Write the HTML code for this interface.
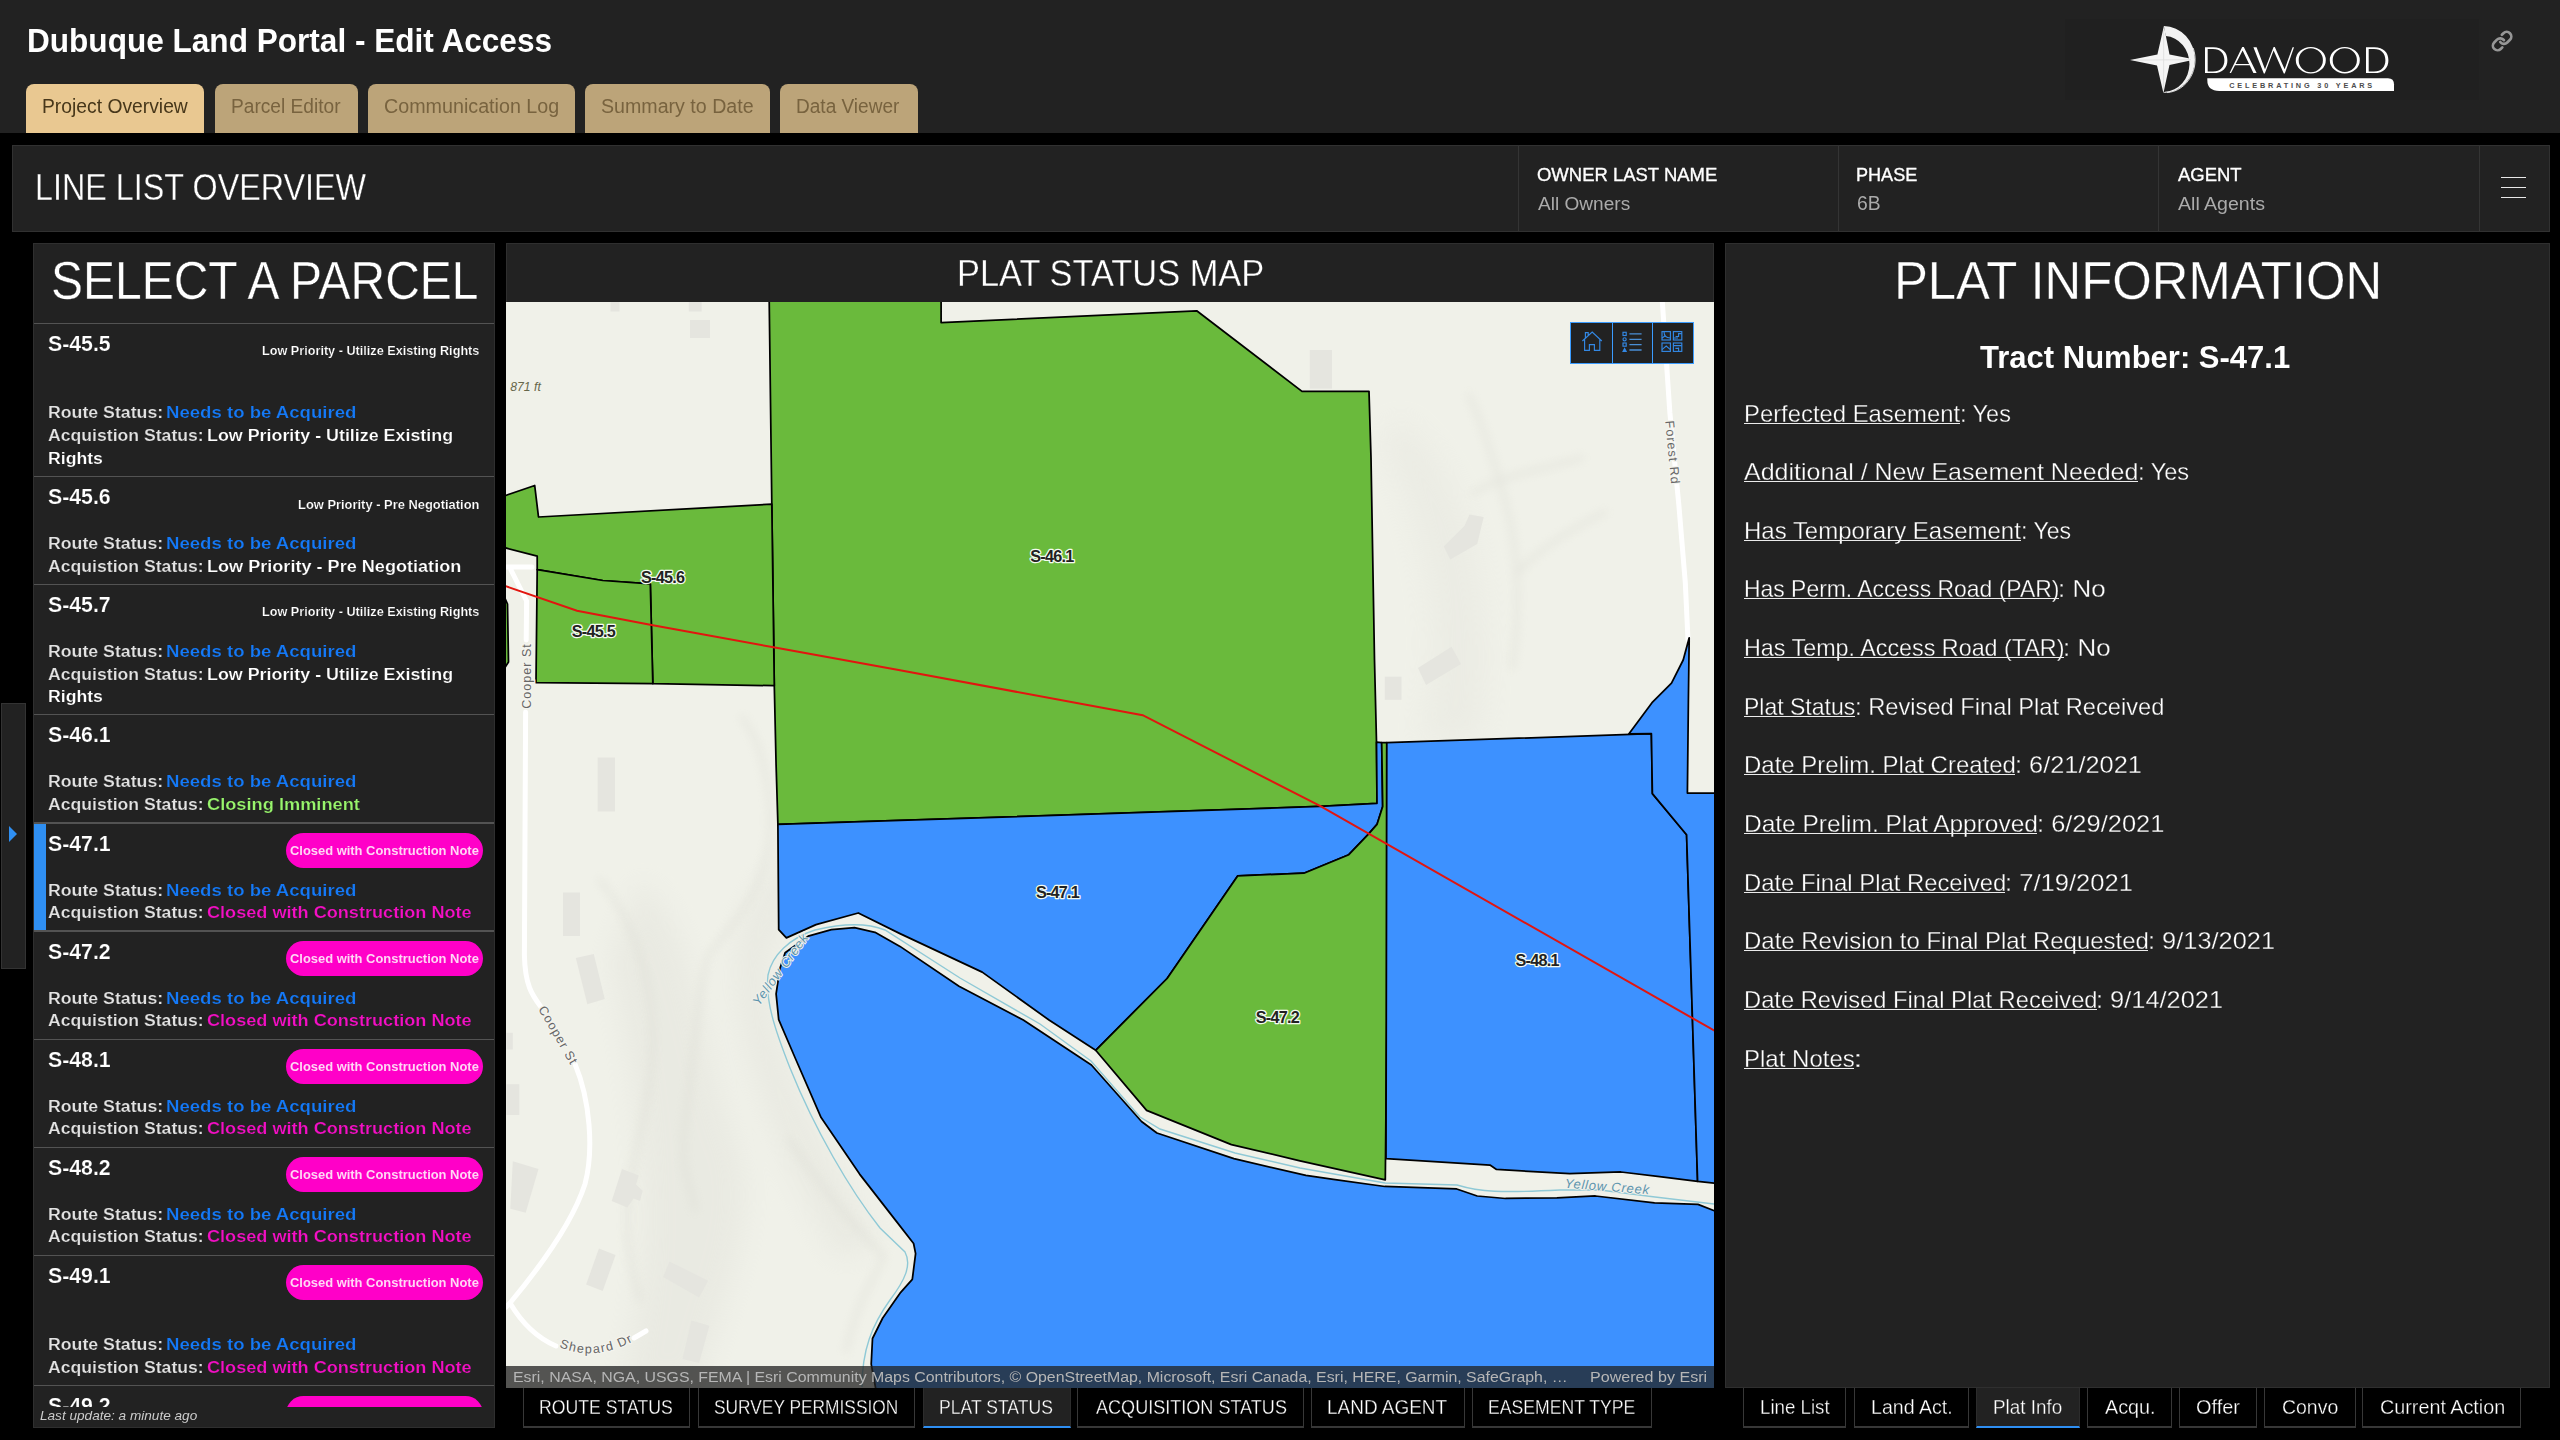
<!DOCTYPE html>
<html lang="en"><head><meta charset="utf-8"><title>Dubuque Land Portal - Edit Access</title>
<style>
html,body{margin:0;padding:0;background:#000;}
body{width:2560px;height:1440px;position:relative;overflow:hidden;font-family:"Liberation Sans",sans-serif;}
.t{position:absolute;white-space:nowrap;line-height:1;transform-origin:0 0;margin:0;padding:0;}
.hdr{position:absolute;left:0;top:0;width:2560px;height:133.3px;background:#222;}
.tab{position:absolute;top:83.7px;height:49.6px;background:#bca479;border-radius:8px 8px 0 0;}
.tab.act{background:#e9c891;}
.fbar{position:absolute;left:12px;top:145px;width:2537.5px;height:86.5px;background:#222;box-sizing:border-box;border:1px solid #313131;}
.fdiv{position:absolute;top:146px;width:1px;height:84.5px;background:#343434;}
.panel{position:absolute;background:#222;box-sizing:border-box;border:1px solid #2f2f2f;}
.clip{position:absolute;overflow:hidden;}
.sep{position:absolute;left:34px;width:460px;height:1.3px;background:#535353;}
.pill{position:absolute;width:197px;height:35px;border-radius:17.5px;background:#ff00c8;}
.btab{position:absolute;top:1387.8px;height:40.2px;box-sizing:border-box;background:#000;border:1.5px solid #373737;border-top:none;border-bottom:2.7px solid #373737;}
.btab.act{background:#222;border-color:#2c2c2c;border-bottom:2.7px solid #2f8ff2;}
.mctl{position:absolute;left:1570.2px;top:322.2px;width:123.5px;height:41.4px;box-sizing:border-box;background:#222;border:1.2px solid #3b9cff;}
.mdiv{position:absolute;top:322.2px;width:1.2px;height:41.4px;background:#3b9cff;}
.ul{position:absolute;height:1.3px;background:#ececec;}
.thin1{-webkit-text-stroke:0.35px #222;}
.thin2{-webkit-text-stroke:0.35px #222;}
.thin3{-webkit-text-stroke:0.3px #222;}
.med{-webkit-text-stroke:0.35px #fff;}
.semi{-webkit-text-stroke:0.2px #222;}
.semi2{}
.thin3b{-webkit-text-stroke:0.3px #000;}
</style></head>
<body>
<div class="hdr"></div>
<div class="t" style="left:27.25px;top:24.00px;font-size:33.60px;color:#fff;font-weight:700;transform:scaleX(0.9401);">Dubuque Land Portal - Edit Access</div>
<div class="tab act" style="left:26.25px;width:178.0px"></div>
<div class="t" style="left:42.16px;top:97.00px;font-size:19.50px;color:#47371a;transform:scaleX(0.9893);">Project Overview</div>
<div class="tab" style="left:214.5px;width:143.0px"></div>
<div class="t" style="left:231.17px;top:97.00px;font-size:19.50px;color:#78633f;transform:scaleX(0.9819);">Parcel Editor</div>
<div class="tab" style="left:367.5px;width:207.0px"></div>
<div class="t" style="left:383.97px;top:97.00px;font-size:19.50px;color:#78633f;transform:scaleX(1.0102);">Communication Log</div>
<div class="tab" style="left:584.9px;width:184.80000000000007px"></div>
<div class="t" style="left:601.12px;top:97.00px;font-size:19.50px;color:#78633f;transform:scaleX(1.0056);">Summary to Date</div>
<div class="tab" style="left:780px;width:137.5px"></div>
<div class="t" style="left:796.38px;top:97.00px;font-size:19.50px;color:#78633f;transform:scaleX(0.9766);">Data Viewer</div>
<div class="fbar"></div>
<div class="fdiv" style="left:1517.5px"></div>
<div class="fdiv" style="left:1838px"></div>
<div class="fdiv" style="left:2158px"></div>
<div class="fdiv" style="left:2478.5px"></div>
<div class="t thin1" style="left:35.11px;top:170.00px;font-size:36.90px;color:#fff;transform:scaleX(0.8762);">LINE LIST OVERVIEW</div>
<div class="t med" style="left:1537.07px;top:165.00px;font-size:19.00px;color:#fff;transform:scaleX(0.9721);">OWNER LAST NAME</div>
<div class="t" style="left:1537.70px;top:195.00px;font-size:18.80px;color:#ababab;transform:scaleX(1.0151);">All Owners</div>
<div class="t med" style="left:1856.45px;top:165.00px;font-size:19.00px;color:#fff;transform:scaleX(0.9512);">PHASE</div>
<div class="t" style="left:1856.74px;top:194.00px;font-size:19.40px;color:#ababab;transform:scaleX(0.9941);">6B</div>
<div class="t med" style="left:2177.80px;top:165.00px;font-size:19.00px;color:#fff;transform:scaleX(0.9712);">AGENT</div>
<div class="t" style="left:2177.70px;top:195.00px;font-size:18.80px;color:#ababab;transform:scaleX(1.0409);">All Agents</div>
<div style="position:absolute;left:2501px;top:176.6px;width:25px;height:1.6px;background:#e8e8e8"></div>
<div style="position:absolute;left:2501px;top:186.6px;width:25px;height:1.6px;background:#e8e8e8"></div>
<div style="position:absolute;left:2501px;top:196.6px;width:25px;height:1.6px;background:#e8e8e8"></div>
<div style="position:absolute;left:2065px;top:19px;width:414px;height:81px;background:#202020"></div>
<svg style="position:absolute;left:2120px;top:15px" width="300" height="90" viewBox="2120 15 300 90">
<path d="M2163.9 26.1 A31.3 33.4 0 0 1 2163.4 92.9 L2165 91.8 A25.6 27.9 0 0 0 2165.7 36.1 Z" fill="#f2f2f2"/>
<path d="M2167 92.6 A30 33 0 0 0 2193.2 48" fill="none" stroke="#e8e8e8" stroke-width="0.9"/>
<path d="M2163.9 26.1 L2169.5 54.4 L2195 59.6 L2169.5 65 L2163.4 92.9 L2157 65.4 L2130 60.1 L2157.4 54.6 Z" fill="#f5f5f5"/>
<path d="M2163.7 30 L2163.6 90 M2134 60.1 L2191 59.7" stroke="#dcdcdc" stroke-width="0.8" fill="none"/>
<path fill="#fff" fill-rule="evenodd" d="M2205 47.3 H2213.2 C2222.8 47.3 2227.4 52.8 2227.4 60.2 C2227.4 67.6 2222.8 73.1 2213.2 73.1 H2205 Z M2207.7 48.9 V71.5 H2213 C2220.6 71.5 2224.4 66.8 2224.4 60.2 C2224.4 53.6 2220.6 48.9 2213 48.9 Z"/>
<path fill="#fff" d="M2229.6 73.1 L2242.2 47 L2243.8 47 L2256.6 73.1 L2253.4 73.1 L2242.6 50.6 L2231 73.1 Z M2234.6 64 H2250.6 V65.2 H2234 Z"/>
<path fill="#fff" d="M2253.4 47.3 L2256.6 47.3 L2265 69.2 L2273.6 47 L2274.8 47 L2284.6 69.2 L2292.6 47.3 L2294 47.3 L2284.8 73.6 L2283.8 73.6 L2273.6 50.6 L2264.8 73.6 L2263.8 73.6 Z"/>
<path fill="#fff" fill-rule="evenodd" d="M2295.8 60.2 A15 13.3 0 1 0 2325.8 60.2 A15 13.3 0 1 0 2295.8 60.2 Z M2298.7000000000003 60.2 A12.1 11.9 0 1 1 2322.9 60.2 A12.1 11.9 0 1 1 2298.7000000000003 60.2 Z"/>
<path fill="#fff" fill-rule="evenodd" d="M2329.8 60.2 A15 13.3 0 1 0 2359.8 60.2 A15 13.3 0 1 0 2329.8 60.2 Z M2332.7000000000003 60.2 A12.1 11.9 0 1 1 2356.9 60.2 A12.1 11.9 0 1 1 2332.7000000000003 60.2 Z"/>
<path fill="#fff" fill-rule="evenodd" d="M2366 47.3 H2374.2 C2383.8 47.3 2388.4 52.8 2388.4 60.2 C2388.4 67.6 2383.8 73.1 2374.2 73.1 H2366 Z M2368.7 48.9 V71.5 H2374 C2381.6 71.5 2385.4 66.8 2385.4 60.2 C2385.4 53.6 2381.6 48.9 2374 48.9 Z"/>
<path d="M2207.3 78.3 H2388 Q2394 78.3 2394 84.3 V90.9 H2219.3 Q2207.3 90.9 2207.3 80 Z" fill="#fff"/>
<text x="2229.2" y="87.9" font-family="Liberation Sans, sans-serif" font-weight="700" font-size="7.3" fill="#4c4c4c" textLength="143" lengthAdjust="spacing">CELEBRATING 30 YEARS</text>
</svg>
<svg style="position:absolute;left:2491.1px;top:30.4px" width="22.2" height="22.2" viewBox="0 0 24 24" fill="none" stroke="#969696" stroke-width="2.9" stroke-linecap="round" stroke-linejoin="round"><path d="M10 13a5 5 0 0 0 7.54.54l3-3a5 5 0 0 0-7.07-7.07l-1.72 1.71"/><path d="M14 11a5 5 0 0 0-7.54-.54l-3 3a5 5 0 0 0 7.07 7.07l1.71-1.71"/></svg>
<div class="panel" style="left:33px;top:242.5px;width:461.5px;height:1185px"></div>
<div class="t thin2" style="left:50.74px;top:254.00px;font-size:53.50px;color:#fff;transform:scaleX(0.8966);">SELECT A PARCEL</div>
<div class="clip" style="left:0;top:0;width:2560px;height:1406.5px">
<div class="sep" style="top:322.7px"></div>
<div class="t semi" style="left:48.16px;top:333.00px;font-size:22.00px;color:#fff;font-weight:700;transform:scaleX(0.9673);">S-45.5</div>
<div class="t semi" style="left:261.98px;top:344.00px;font-size:13.60px;color:#fff;font-weight:700;transform:scaleX(0.9314);">Low Priority - Utilize Existing Rights</div>
<div class="t semi" style="left:47.75px;top:404.00px;font-size:17.40px;color:#e2e2e2;font-weight:700;transform:scaleX(1.0189);">Route Status:</div>
<div class="t semi" style="left:166.09px;top:404.00px;font-size:17.40px;color:#1479f7;font-weight:700;transform:scaleX(1.0687);">Needs to be Acquired</div>
<div class="t semi" style="left:48.46px;top:427.00px;font-size:17.40px;color:#e2e2e2;font-weight:700;transform:scaleX(1.0136);">Acquistion Status:</div>
<div class="t semi" style="left:206.84px;top:427.00px;font-size:17.40px;color:#fff;font-weight:700;transform:scaleX(1.0269);">Low Priority - Utilize Existing</div>
<div class="t semi" style="left:47.75px;top:450.00px;font-size:17.40px;color:#fff;font-weight:700;transform:scaleX(1.0155);">Rights</div>
<div class="sep" style="top:476.0px"></div>
<div class="t semi" style="left:48.16px;top:486.00px;font-size:22.00px;color:#fff;font-weight:700;transform:scaleX(0.9673);">S-45.6</div>
<div class="t semi" style="left:298.16px;top:498.00px;font-size:13.60px;color:#fff;font-weight:700;transform:scaleX(0.9496);">Low Priority - Pre Negotiation</div>
<div class="t semi" style="left:47.75px;top:535.00px;font-size:17.40px;color:#e2e2e2;font-weight:700;transform:scaleX(1.0189);">Route Status:</div>
<div class="t semi" style="left:166.09px;top:535.00px;font-size:17.40px;color:#1479f7;font-weight:700;transform:scaleX(1.0687);">Needs to be Acquired</div>
<div class="t semi" style="left:48.46px;top:558.00px;font-size:17.40px;color:#e2e2e2;font-weight:700;transform:scaleX(1.0136);">Acquistion Status:</div>
<div class="t semi" style="left:206.82px;top:558.00px;font-size:17.40px;color:#fff;font-weight:700;transform:scaleX(1.0401);">Low Priority - Pre Negotiation</div>
<div class="sep" style="top:583.9px"></div>
<div class="t semi" style="left:48.16px;top:594.00px;font-size:22.00px;color:#fff;font-weight:700;transform:scaleX(0.9673);">S-45.7</div>
<div class="t semi" style="left:261.98px;top:605.00px;font-size:13.60px;color:#fff;font-weight:700;transform:scaleX(0.9314);">Low Priority - Utilize Existing Rights</div>
<div class="t semi" style="left:47.75px;top:643.00px;font-size:17.40px;color:#e2e2e2;font-weight:700;transform:scaleX(1.0189);">Route Status:</div>
<div class="t semi" style="left:166.09px;top:643.00px;font-size:17.40px;color:#1479f7;font-weight:700;transform:scaleX(1.0687);">Needs to be Acquired</div>
<div class="t semi" style="left:48.46px;top:666.00px;font-size:17.40px;color:#e2e2e2;font-weight:700;transform:scaleX(1.0136);">Acquistion Status:</div>
<div class="t semi" style="left:206.84px;top:666.00px;font-size:17.40px;color:#fff;font-weight:700;transform:scaleX(1.0269);">Low Priority - Utilize Existing</div>
<div class="t semi" style="left:47.75px;top:688.00px;font-size:17.40px;color:#fff;font-weight:700;transform:scaleX(1.0155);">Rights</div>
<div class="sep" style="top:714.2px"></div>
<div class="t semi" style="left:48.16px;top:724.00px;font-size:22.00px;color:#fff;font-weight:700;transform:scaleX(0.9673);">S-46.1</div>
<div class="t semi" style="left:47.75px;top:773.00px;font-size:17.40px;color:#e2e2e2;font-weight:700;transform:scaleX(1.0189);">Route Status:</div>
<div class="t semi" style="left:166.09px;top:773.00px;font-size:17.40px;color:#1479f7;font-weight:700;transform:scaleX(1.0687);">Needs to be Acquired</div>
<div class="t semi" style="left:48.46px;top:796.00px;font-size:17.40px;color:#e2e2e2;font-weight:700;transform:scaleX(1.0136);">Acquistion Status:</div>
<div class="t semi" style="left:207.27px;top:796.00px;font-size:17.40px;color:#98f56c;font-weight:700;transform:scaleX(1.0481);">Closing Imminent</div>
<div class="sep" style="top:822.4px"></div>
<div style="position:absolute;left:34px;top:823.7px;width:11.5px;height:107px;background:#2f8ff2"></div>
<div class="t semi" style="left:48.16px;top:833.00px;font-size:22.00px;color:#fff;font-weight:700;transform:scaleX(0.9673);">S-47.1</div>
<div class="pill" style="left:286.1px;top:833.3px"></div>
<div class="t" style="left:290.08px;top:844.00px;font-size:13.60px;color:#ffd6f5;font-weight:700;transform:scaleX(0.9507);">Closed with Construction Note</div>
<div class="t semi" style="left:47.75px;top:882.00px;font-size:17.40px;color:#e2e2e2;font-weight:700;transform:scaleX(1.0189);">Route Status:</div>
<div class="t semi" style="left:166.09px;top:882.00px;font-size:17.40px;color:#1479f7;font-weight:700;transform:scaleX(1.0687);">Needs to be Acquired</div>
<div class="t semi" style="left:48.46px;top:904.00px;font-size:17.40px;color:#e2e2e2;font-weight:700;transform:scaleX(1.0136);">Acquistion Status:</div>
<div class="t semi" style="left:207.28px;top:904.00px;font-size:17.40px;color:#f30fc4;font-weight:700;transform:scaleX(1.0415);">Closed with Construction Note</div>
<div class="sep" style="top:930.4px"></div>
<div class="t semi" style="left:48.16px;top:941.00px;font-size:22.00px;color:#fff;font-weight:700;transform:scaleX(0.9673);">S-47.2</div>
<div class="pill" style="left:286.1px;top:941.3px"></div>
<div class="t" style="left:290.08px;top:952.00px;font-size:13.60px;color:#ffd6f5;font-weight:700;transform:scaleX(0.9507);">Closed with Construction Note</div>
<div class="t semi" style="left:47.75px;top:990.00px;font-size:17.40px;color:#e2e2e2;font-weight:700;transform:scaleX(1.0189);">Route Status:</div>
<div class="t semi" style="left:166.09px;top:990.00px;font-size:17.40px;color:#1479f7;font-weight:700;transform:scaleX(1.0687);">Needs to be Acquired</div>
<div class="t semi" style="left:48.46px;top:1012.00px;font-size:17.40px;color:#e2e2e2;font-weight:700;transform:scaleX(1.0136);">Acquistion Status:</div>
<div class="t semi" style="left:207.28px;top:1012.00px;font-size:17.40px;color:#f30fc4;font-weight:700;transform:scaleX(1.0415);">Closed with Construction Note</div>
<div class="sep" style="top:1038.5px"></div>
<div class="t semi" style="left:48.16px;top:1049.00px;font-size:22.00px;color:#fff;font-weight:700;transform:scaleX(0.9673);">S-48.1</div>
<div class="pill" style="left:286.1px;top:1049.4px"></div>
<div class="t" style="left:290.08px;top:1060.00px;font-size:13.60px;color:#ffd6f5;font-weight:700;transform:scaleX(0.9507);">Closed with Construction Note</div>
<div class="t semi" style="left:47.75px;top:1098.00px;font-size:17.40px;color:#e2e2e2;font-weight:700;transform:scaleX(1.0189);">Route Status:</div>
<div class="t semi" style="left:166.09px;top:1098.00px;font-size:17.40px;color:#1479f7;font-weight:700;transform:scaleX(1.0687);">Needs to be Acquired</div>
<div class="t semi" style="left:48.46px;top:1120.00px;font-size:17.40px;color:#e2e2e2;font-weight:700;transform:scaleX(1.0136);">Acquistion Status:</div>
<div class="t semi" style="left:207.28px;top:1120.00px;font-size:17.40px;color:#f30fc4;font-weight:700;transform:scaleX(1.0415);">Closed with Construction Note</div>
<div class="sep" style="top:1146.5px"></div>
<div class="t semi" style="left:48.16px;top:1157.00px;font-size:22.00px;color:#fff;font-weight:700;transform:scaleX(0.9673);">S-48.2</div>
<div class="pill" style="left:286.1px;top:1157.4px"></div>
<div class="t" style="left:290.08px;top:1168.00px;font-size:13.60px;color:#ffd6f5;font-weight:700;transform:scaleX(0.9507);">Closed with Construction Note</div>
<div class="t semi" style="left:47.75px;top:1206.00px;font-size:17.40px;color:#e2e2e2;font-weight:700;transform:scaleX(1.0189);">Route Status:</div>
<div class="t semi" style="left:166.09px;top:1206.00px;font-size:17.40px;color:#1479f7;font-weight:700;transform:scaleX(1.0687);">Needs to be Acquired</div>
<div class="t semi" style="left:48.46px;top:1228.00px;font-size:17.40px;color:#e2e2e2;font-weight:700;transform:scaleX(1.0136);">Acquistion Status:</div>
<div class="t semi" style="left:207.28px;top:1228.00px;font-size:17.40px;color:#f30fc4;font-weight:700;transform:scaleX(1.0415);">Closed with Construction Note</div>
<div class="sep" style="top:1254.5px"></div>
<div class="t semi" style="left:48.16px;top:1265.00px;font-size:22.00px;color:#fff;font-weight:700;transform:scaleX(0.9673);">S-49.1</div>
<div class="pill" style="left:286.1px;top:1265.4px"></div>
<div class="t" style="left:290.08px;top:1276.00px;font-size:13.60px;color:#ffd6f5;font-weight:700;transform:scaleX(0.9507);">Closed with Construction Note</div>
<div class="t semi" style="left:47.75px;top:1336.00px;font-size:17.40px;color:#e2e2e2;font-weight:700;transform:scaleX(1.0189);">Route Status:</div>
<div class="t semi" style="left:166.09px;top:1336.00px;font-size:17.40px;color:#1479f7;font-weight:700;transform:scaleX(1.0687);">Needs to be Acquired</div>
<div class="t semi" style="left:48.46px;top:1359.00px;font-size:17.40px;color:#e2e2e2;font-weight:700;transform:scaleX(1.0136);">Acquistion Status:</div>
<div class="t semi" style="left:207.28px;top:1359.00px;font-size:17.40px;color:#f30fc4;font-weight:700;transform:scaleX(1.0415);">Closed with Construction Note</div>
<div class="sep" style="top:1384.9px"></div>
<div class="t semi" style="left:48.16px;top:1395.00px;font-size:22.00px;color:#fff;font-weight:700;transform:scaleX(0.9673);">S-49.2</div>
<div class="pill" style="left:286.1px;top:1395.8px"></div>
<div class="t" style="left:290.08px;top:1406.00px;font-size:13.60px;color:#ffd6f5;font-weight:700;transform:scaleX(0.9507);">Closed with Construction Note</div>
<div class="t semi" style="left:47.75px;top:1444.00px;font-size:17.40px;color:#e2e2e2;font-weight:700;transform:scaleX(1.0189);">Route Status:</div>
<div class="t semi" style="left:166.09px;top:1444.00px;font-size:17.40px;color:#1479f7;font-weight:700;transform:scaleX(1.0687);">Needs to be Acquired</div>
<div class="t semi" style="left:48.46px;top:1467.00px;font-size:17.40px;color:#e2e2e2;font-weight:700;transform:scaleX(1.0136);">Acquistion Status:</div>
<div class="t semi" style="left:207.28px;top:1467.00px;font-size:17.40px;color:#f30fc4;font-weight:700;transform:scaleX(1.0415);">Closed with Construction Note</div>
</div>
<div class="t" style="left:39.59px;top:1410.00px;font-size:12.60px;color:#ccc;font-style:italic;transform:scaleX(1.0796);">Last update: a minute ago</div>
<div style="position:absolute;left:1px;top:702.5px;width:23px;height:264px;background:#222;border:1px solid #333;box-sizing:content-box"></div>
<div style="position:absolute;left:9px;top:826px;width:0;height:0;border-top:8px solid transparent;border-bottom:8px solid transparent;border-left:8px solid #2f8ff2"></div>
<div class="panel" style="left:506px;top:242.5px;width:1208px;height:1145.3px"></div>
<div class="t thin1" style="left:956.75px;top:255.00px;font-size:37.70px;color:#fff;transform:scaleX(0.9132);">PLAT STATUS MAP</div>
<svg style="position:absolute;left:506px;top:302px" width="1208" height="1085.8" viewBox="506 302 1208 1085.8">
<defs><filter id="bl" x="-30%" y="-30%" width="160%" height="160%"><feGaussianBlur stdDeviation="14"/></filter><filter id="bl2" x="-30%" y="-30%" width="160%" height="160%"><feGaussianBlur stdDeviation="5"/></filter></defs>
<rect x="506" y="302" width="1208" height="1086" fill="#f0f1e9"/>
<g filter="url(#bl)" opacity="0.32"><path d="M640 880 C700 930 700 1050 740 1150 C760 1230 720 1300 700 1387 L620 1387 C660 1250 640 1100 610 960Z" fill="#dcdcd4"/><path d="M870 760 C900 820 780 900 770 960 C760 1000 790 1100 880 1240 L840 1260 C760 1130 720 1000 740 930 C760 860 840 820 840 760Z" fill="#dcdcd4"/><path d="M1400 420 C1470 470 1500 600 1480 740 L1420 740 C1450 620 1420 520 1380 440Z" fill="#e2e2da"/></g>
<g filter="url(#bl2)" fill="none" stroke="#d6d6ce" stroke-width="5" opacity="0.38" stroke-linecap="round"><path d="M1469 395 C1485 430 1500 480 1508 512 S1522 600 1512 668"/><path d="M1582 458 C1540 470 1500 476 1473 493"/><path d="M1605 512 C1570 530 1540 548 1516 574"/><path d="M742 718 C765 745 772 800 770 832 C766 880 750 905 709 954 C698 985 694 1060 686 1115 S690 1180 695 1210"/><path d="M789 1139 C810 1170 830 1200 884 1257 C870 1285 858 1300 846 1351"/><path d="M600 880 C640 930 660 1000 650 1080 S610 1200 640 1300"/></g>
<polygon points="690.0,320.0 710.0,320.0 710.0,338.0 690.0,338.0" fill="#e5e5df"/>
<polygon points="610.5,302.0 619.5,302.0 619.5,311.5 610.5,311.5" fill="#e5e5df"/>
<polygon points="688.8,302.0 701.6,302.0 701.6,311.5 688.8,311.5" fill="#e5e5df"/>
<polygon points="1309.8,350.0 1332.0,350.0 1332.0,388.6 1309.8,388.6" fill="#e5e5df"/>
<polygon points="1469.5,514.5 1483.7,517.0 1477.2,544.0 1450.3,559.4 1443.8,546.6 1464.4,526.0" fill="#e5e5df"/>
<polygon points="1418.0,668.0 1451.6,646.8 1461.0,664.0 1426.0,685.0" fill="#e5e5df"/>
<polygon points="1384.8,676.7 1401.5,676.7 1401.5,699.8 1384.8,699.8" fill="#e5e5df"/>
<polygon points="597.6,757.6 615.0,757.6 615.0,811.6 597.6,811.6" fill="#e5e5df"/>
<polygon points="563.0,892.5 580.0,892.5 580.0,936.0 563.0,936.0" fill="#e5e5df"/>
<polygon points="575.8,958.0 593.8,954.1 604.8,999.0 587.3,1004.2" fill="#e5e5df"/>
<polygon points="506.4,1032.8 512.8,1032.8 512.8,1049.5 506.4,1049.5" fill="#e5e5df"/>
<polygon points="506.4,1084.2 519.3,1084.2 519.3,1115.0 506.4,1115.0" fill="#e5e5df"/>
<polygon points="512.8,1161.3 538.5,1169.0 525.7,1212.7 510.3,1208.8" fill="#e5e5df"/>
<polygon points="622.0,1169.0 638.7,1175.4 636.1,1184.4 642.6,1190.8 640.0,1201.1 633.6,1198.5 627.2,1207.5 611.7,1201.1" fill="#e5e5df"/>
<polygon points="598.9,1248.6 615.6,1255.0 602.7,1291.0 586.1,1284.6" fill="#e5e5df"/>
<polygon points="669.5,1261.5 708.1,1280.7 699.1,1297.4 663.1,1276.9" fill="#e5e5df"/>
<polygon points="691.4,1320.5 709.4,1325.7 699.1,1362.9 682.4,1359.1" fill="#e5e5df"/>
<path d="M506 567 L532 567 M511 570 L526.6 601 L526.2 640 M525.6 712 L524.4 955 C525 985 532 995 541 1007 M575 1064 C590 1100 594 1150 585 1184 C575 1215 550 1255 510 1303 L506 1307 M510 1303 C520 1320 535 1337 556 1346 M634 1338 L646 1331" fill="none" stroke="#fff" stroke-width="5" stroke-linecap="round" stroke-linejoin="round"/>
<path d="M1662.2 300 L1669.9 413 L1678.9 505.5 L1685.3 582.6 L1688 640" fill="none" stroke="#fff" stroke-width="5" stroke-linecap="round" stroke-linejoin="round"/>
<path d="M862 1387 C862 1350 872 1325 890 1300 C905 1280 912 1265 905 1252 L880 1228 C850 1190 815 1130 790 1068 C775 1030 765 1000 768 975 C772 955 790 938 815 930 C840 924 865 922 885 930 L960 978 L1040 1024 L1091 1061 L1140 1117 L1160 1129 L1235 1153 L1300 1168 L1385 1183 L1457 1185 C1480 1192 1500 1193 1560 1190 L1600 1190 L1655 1197 L1714 1204" fill="none" stroke="#8fc9d6" stroke-width="1.4"/>
<polygon points="769.2,300.0 941.1,300.0 941.1,322.6 1196.7,310.8 1302.0,391.4 1369.0,391.4 1371.0,457.7 1374.5,660.0 1376.5,742.2 1377.0,803.3 1320.0,806.4 900.0,820.5 777.9,824.4 776.1,765.3 774.3,685.7 771.8,504.2" fill="#6aba3c" stroke="#000" stroke-width="1.75" stroke-linejoin="round"/>
<polygon points="504.0,496.0 534.7,485.5 538.5,517.0 771.8,504.2 774.3,685.7 652.8,683.6 650.3,583.8 602.7,580.5 537.2,569.7 537.2,556.1 504.0,547.5" fill="#6aba3c" stroke="#000" stroke-width="1.75" stroke-linejoin="round"/>
<polygon points="537.2,569.7 602.7,580.5 650.3,583.8 652.8,683.6 536.0,682.6" fill="#6aba3c" stroke="#000" stroke-width="1.75" stroke-linejoin="round"/>
<polygon points="504.0,596.0 507.5,604.0 508.5,662.0 504.0,669.0" fill="#6aba3c" stroke="#000" stroke-width="1.75" stroke-linejoin="round"/>
<polygon points="777.9,824.4 900.0,820.5 1320.0,806.4 1377.0,803.3 1376.5,742.2 1381.7,742.7 1382.7,806.4 1377.0,824.4 1368.0,834.7 1348.8,854.7 1303.9,873.2 1237.8,875.8 1167.1,978.5 1095.7,1050.3 1049.0,1020.0 982.2,972.1 900.0,933.6 858.3,913.0 816.0,924.6 786.4,937.9 778.7,929.7" fill="#3d91ff" stroke="#000" stroke-width="1.75" stroke-linejoin="round"/>
<polygon points="1381.7,742.7 1386.8,742.7 1386.8,1020.0 1385.3,1179.8 1300.0,1160.8 1231.4,1144.6 1146.6,1110.4 1095.7,1050.3 1167.1,978.5 1237.8,875.8 1303.9,873.2 1348.8,854.7 1368.0,834.7 1377.0,824.4 1382.7,806.4" fill="#6aba3c" stroke="#000" stroke-width="1.75" stroke-linejoin="round"/>
<polygon points="1386.8,742.7 1651.4,733.7 1652.4,793.6 1686.6,834.7 1692.5,1020.0 1697.6,1181.3 1659.6,1176.7 1621.0,1172.0 1569.7,1173.6 1496.5,1169.5 1490.0,1165.1 1386.0,1158.7" fill="#3d91ff" stroke="#000" stroke-width="1.75" stroke-linejoin="round"/>
<polygon points="1628.8,734.0 1652.0,702.7 1671.5,683.2 1683.2,660.0 1689.2,637.8 1688.4,700.0 1687.4,793.1 1716.0,793.1 1716.0,1183.3 1697.6,1181.3 1692.5,1020.0 1686.6,834.7 1652.4,793.6 1651.4,733.7" fill="#3d91ff" stroke="#000" stroke-width="1.75" stroke-linejoin="round"/>
<polygon points="785.1,952.8 808.2,936.1 831.4,929.7 854.5,927.7 875.0,932.3 900.0,946.4 959.0,986.2 1023.3,1020.0 1091.4,1065.0 1141.5,1121.5 1156.9,1133.0 1233.9,1158.7 1305.9,1175.4 1333.4,1179.3 1384.8,1186.5 1456.7,1189.0 1477.2,1196.0 1505.5,1198.5 1556.9,1197.8 1595.4,1196.0 1654.5,1202.9 1698.0,1204.4 1716.0,1211.4 1716.0,1390.0 876.0,1390.0 871.2,1364.2 872.5,1338.5 882.7,1318.0 900.7,1292.3 912.3,1279.4 915.6,1253.7 913.6,1243.5 895.6,1220.4 859.6,1174.1 821.1,1117.6 795.4,1058.5 778.7,1019.6 776.1,993.9 780.0,968.2" fill="#3d91ff" stroke="#000" stroke-width="1.75" stroke-linejoin="round"/>
<polyline points="504,585.6 577,610.8 651.5,625 773.6,647.3 900,670.3 1142.7,715.2 1320,805.9 1716,1031.6" fill="none" stroke="#e2150f" stroke-width="2"/>
<text x="662.5999999999999" y="583.5" text-anchor="middle" font-family="Liberation Sans, sans-serif" font-weight="700" font-size="16.2" letter-spacing="-0.75" fill="#222" stroke="#f4fbf0" stroke-width="2.5" stroke-linejoin="round" paint-order="stroke">S-45.6</text>
<text x="593.3" y="637.4" text-anchor="middle" font-family="Liberation Sans, sans-serif" font-weight="700" font-size="16.2" letter-spacing="-0.75" fill="#222" stroke="#f4fbf0" stroke-width="2.5" stroke-linejoin="round" paint-order="stroke">S-45.5</text>
<text x="1051.8999999999999" y="562.1" text-anchor="middle" font-family="Liberation Sans, sans-serif" font-weight="700" font-size="16.2" letter-spacing="-0.75" fill="#222" stroke="#f4fbf0" stroke-width="2.5" stroke-linejoin="round" paint-order="stroke">S-46.1</text>
<text x="1057.5" y="897.7" text-anchor="middle" font-family="Liberation Sans, sans-serif" font-weight="700" font-size="16.2" letter-spacing="-0.75" fill="#222" stroke="#f4fbf0" stroke-width="2.5" stroke-linejoin="round" paint-order="stroke">S-47.1</text>
<text x="1277.3" y="1023.5" text-anchor="middle" font-family="Liberation Sans, sans-serif" font-weight="700" font-size="16.2" letter-spacing="-0.75" fill="#222" stroke="#f4fbf0" stroke-width="2.5" stroke-linejoin="round" paint-order="stroke">S-47.2</text>
<text x="1537.1" y="965.8" text-anchor="middle" font-family="Liberation Sans, sans-serif" font-weight="700" font-size="16.2" letter-spacing="-0.75" fill="#222" stroke="#f4fbf0" stroke-width="2.5" stroke-linejoin="round" paint-order="stroke">S-48.1</text>
<text transform="translate(530.5,676) rotate(-90)" text-anchor="middle" font-family="Liberation Sans, sans-serif" font-size="12.6" fill="#666" stroke="#f4f4ee" stroke-width="2.5" paint-order="stroke" letter-spacing="1">Cooper St</text>
<text transform="translate(554.5,1037.5) rotate(60)" text-anchor="middle" font-family="Liberation Sans, sans-serif" font-size="12.6" fill="#666" stroke="#f4f4ee" stroke-width="2.5" paint-order="stroke" letter-spacing="1">Cooper St</text>
<text transform="translate(1668.3,453) rotate(84.5)" text-anchor="middle" font-family="Liberation Sans, sans-serif" font-size="12.6" fill="#666" stroke="#f4f4ee" stroke-width="2.5" paint-order="stroke" letter-spacing="1">Forest Rd</text>
<path id="shp" d="M556 1341 Q594 1360 636 1335" fill="none"/>
<text font-family="Liberation Sans, sans-serif" font-size="12.6" fill="#666" stroke="#f4f4ee" stroke-width="2.5" paint-order="stroke" letter-spacing="1" dy="4"><textPath href="#shp" startOffset="50%" text-anchor="middle">Shepard Dr</textPath></text>
<text transform="translate(1607,1191) rotate(4.5)" text-anchor="middle" font-family="Liberation Sans, sans-serif" font-size="13" font-style="italic" fill="#5d95ad" stroke="#f0f0ea" stroke-width="2" paint-order="stroke" letter-spacing="0.8">Yellow Creek</text>
<text transform="translate(784,972) rotate(-54)" text-anchor="middle" font-family="Liberation Sans, sans-serif" font-size="13" font-style="italic" fill="#5d95ad" stroke="#f0f0ea" stroke-width="2" paint-order="stroke" letter-spacing="0.8">Yellow Creek</text>
<text x="510.3" y="391.5" font-family="Liberation Sans, sans-serif" font-size="12.2" font-style="italic" fill="#66664a">871 ft</text>
</svg>
<div class="mctl"></div><div class="mdiv" style="left:1612px"></div><div class="mdiv" style="left:1652.2px"></div>
<svg style="position:absolute;left:1570px;top:322px" width="124" height="42" viewBox="0 0 124 42" fill="none" stroke="#3388e4" stroke-width="1.15">
<path d="M12.4 19 L22.2 10 L31.8 19 M14.6 17.2 V28.4 H19.4 V22.6 H24.4 V28.4 H29.8 V17.2 M15.4 16.2 V10.6 H18.2 V13.4"/>
<g stroke-width="1.3" stroke="#4a8fd6"><path d="M59.4 11.9 H71.6 M59.4 17.3 H71.6 M59.4 22.6 H71.6 M59.4 28 H71.6"/></g>
<rect x="53" y="10.3" width="3.2" height="3.2"/><circle cx="54.6" cy="17.3" r="1.6"/><rect x="53" y="21" width="3.2" height="3.2"/><path d="M53 29.5 L54.6 26.4 L56.2 29.5Z" fill="#3388e4"/>
<rect x="92" y="9.6" width="8.4" height="8.4"/><rect x="103.4" y="9.6" width="8.4" height="8.4"/><rect x="92" y="21" width="8.4" height="8.4"/><rect x="103.4" y="21" width="8.4" height="8.4"/>
<path d="M94 9.6 C94 13 96 16 100.4 16 M92 16 L95 14 M105.6 14.5 H108.6 V11.6 H111.8 M103.4 16 H108 M92 27.6 L96.2 24 L100.4 27.6 M103.4 23.6 H111.8 M108.6 25.6 V29.4 M105.4 26.4 H108.6" stroke-width="1.1"/>
</svg>
<div style="position:absolute;left:506px;top:1365.8px;width:1208px;height:22px;background:rgba(34,34,34,0.76)"></div>
<div class="t" style="left:512.63px;top:1369.00px;font-size:15.20px;color:#b6b6b6;transform:scaleX(1.0457);">Esri, NASA, NGA, USGS, FEMA | Esri Community Maps Contributors, © OpenStreetMap, Microsoft, Esri Canada, Esri, HERE, Garmin, SafeGraph, …</div>
<div class="t" style="left:1590.21px;top:1369.00px;font-size:15.20px;color:#b6b6b6;transform:scaleX(1.0595);">Powered by Esri</div>
<div class="btab" style="left:522.9px;width:167.10000000000002px"></div>
<div class="t thin3b" style="left:539.09px;top:1398.00px;font-size:19.80px;color:#fff;transform:scaleX(0.8928);">ROUTE STATUS</div>
<div class="btab" style="left:697.5px;width:217.89999999999998px"></div>
<div class="t thin3b" style="left:714.22px;top:1398.00px;font-size:19.80px;color:#fff;transform:scaleX(0.8760);">SURVEY PERMISSION</div>
<div class="btab act" style="left:922.9px;width:147.69999999999993px"></div>
<div class="t thin3" style="left:939.29px;top:1398.00px;font-size:19.80px;color:#fff;transform:scaleX(0.8878);">PLAT STATUS</div>
<div class="btab" style="left:1077.3px;width:226.5px"></div>
<div class="t thin3b" style="left:1095.90px;top:1398.00px;font-size:19.80px;color:#fff;transform:scaleX(0.9128);">ACQUISITION STATUS</div>
<div class="btab" style="left:1311px;width:154px"></div>
<div class="t thin3b" style="left:1327.48px;top:1398.00px;font-size:19.80px;color:#fff;transform:scaleX(0.9583);">LAND AGENT</div>
<div class="btab" style="left:1472.2px;width:179.5999999999999px"></div>
<div class="t thin3b" style="left:1488.29px;top:1398.00px;font-size:19.80px;color:#fff;transform:scaleX(0.8911);">EASEMENT TYPE</div>
<div class="panel" style="left:1725px;top:242.5px;width:824.5px;height:1145.3px"></div>
<div class="t thin2" style="left:1893.94px;top:254.00px;font-size:53.40px;color:#fff;transform:scaleX(0.9512);">PLAT INFORMATION</div>
<div class="t semi2" style="left:1979.99px;top:342.00px;font-size:31.50px;color:#fff;font-weight:700;transform:scaleX(0.9845);">Tract Number: S-47.1</div>
<div class="t thin3" style="left:1743.69px;top:403.00px;font-size:23.40px;color:#fff;transform:scaleX(1.0195);">Perfected Easement</div>
<div class="ul" style="left:1743.6px;top:423px;width:216.9px"></div>
<div class="t thin3" style="left:1960.39px;top:403.00px;font-size:23.40px;color:#fff;transform:scaleX(1.0031);">: Yes</div>
<div class="t thin3" style="left:1744.20px;top:461.00px;font-size:23.40px;color:#fff;transform:scaleX(1.0680);">Additional / New Easement Needed</div>
<div class="ul" style="left:1743.6px;top:481px;width:394.4px"></div>
<div class="t thin3" style="left:2137.88px;top:461.00px;font-size:23.40px;color:#fff;transform:scaleX(1.0083);">: Yes</div>
<div class="t thin3" style="left:1743.68px;top:520.00px;font-size:23.40px;color:#fff;transform:scaleX(1.0254);">Has Temporary Easement</div>
<div class="ul" style="left:1743.6px;top:540px;width:277.7px"></div>
<div class="t thin3" style="left:2021.17px;top:520.00px;font-size:23.40px;color:#fff;transform:scaleX(0.9874);">: Yes</div>
<div class="t thin3" style="left:1743.77px;top:578.00px;font-size:23.40px;color:#fff;transform:scaleX(0.9797);">Has Perm. Access Road (PAR)</div>
<div class="ul" style="left:1743.6px;top:598px;width:315.2px"></div>
<div class="t thin3" style="left:2058.41px;top:578.00px;font-size:23.40px;color:#fff;transform:scaleX(1.1091);">: No</div>
<div class="t thin3" style="left:1743.73px;top:637.00px;font-size:23.40px;color:#fff;transform:scaleX(0.9968);">Has Temp. Access Road (TAR)</div>
<div class="ul" style="left:1743.6px;top:657px;width:320.2px"></div>
<div class="t thin3" style="left:2063.41px;top:637.00px;font-size:23.40px;color:#fff;transform:scaleX(1.1091);">: No</div>
<div class="t thin3" style="left:1743.76px;top:696.00px;font-size:23.40px;color:#fff;transform:scaleX(0.9833);">Plat Status</div>
<div class="ul" style="left:1743.6px;top:716px;width:111.4px"></div>
<div class="t thin3" style="left:1854.87px;top:696.00px;font-size:23.40px;color:#fff;transform:scaleX(1.0129);">: Revised Final Plat Received</div>
<div class="t thin3" style="left:1743.68px;top:754.00px;font-size:23.40px;color:#fff;transform:scaleX(1.0253);">Date Prelim. Plat Created</div>
<div class="ul" style="left:1743.6px;top:774px;width:271.4px"></div>
<div class="t thin3" style="left:2014.72px;top:754.00px;font-size:23.40px;color:#fff;transform:scaleX(1.0837);">: 6/21/2021</div>
<div class="t thin3" style="left:1743.64px;top:813.00px;font-size:23.40px;color:#fff;transform:scaleX(1.0467);">Date Prelim. Plat Approved</div>
<div class="ul" style="left:1743.6px;top:833px;width:293.4px"></div>
<div class="t thin3" style="left:2036.71px;top:813.00px;font-size:23.40px;color:#fff;transform:scaleX(1.0881);">: 6/29/2021</div>
<div class="t thin3" style="left:1743.69px;top:872.00px;font-size:23.40px;color:#fff;transform:scaleX(1.0191);">Date Final Plat Received</div>
<div class="ul" style="left:1743.6px;top:892px;width:261.9px"></div>
<div class="t thin3" style="left:2005.20px;top:872.00px;font-size:23.40px;color:#fff;transform:scaleX(1.0925);">: 7/19/2021</div>
<div class="t thin3" style="left:1743.68px;top:930.00px;font-size:23.40px;color:#fff;transform:scaleX(1.0243);">Date Revision to Final Plat Requested</div>
<div class="ul" style="left:1743.6px;top:950px;width:404.4px"></div>
<div class="t thin3" style="left:2147.71px;top:930.00px;font-size:23.40px;color:#fff;transform:scaleX(1.0859);">: 9/13/2021</div>
<div class="t thin3" style="left:1743.70px;top:989.00px;font-size:23.40px;color:#fff;transform:scaleX(1.0147);">Date Revised Final Plat Received</div>
<div class="ul" style="left:1743.6px;top:1009px;width:353.2px"></div>
<div class="t thin3" style="left:2096.46px;top:989.00px;font-size:23.40px;color:#fff;transform:scaleX(1.0859);">: 9/14/2021</div>
<div class="t thin3" style="left:1743.68px;top:1048.00px;font-size:23.40px;color:#fff;transform:scaleX(1.0266);">Plat Notes</div>
<div class="ul" style="left:1743.6px;top:1068px;width:110.9px"></div>
<div class="t thin3" style="left:1853.35px;top:1048.00px;font-size:23.40px;color:#fff;transform:scaleX(1.4957);">:</div>
<div class="btab" style="left:1743px;width:103.29999999999995px"></div>
<div class="t thin3b" style="left:1760.10px;top:1398.00px;font-size:19.40px;color:#fff;transform:scaleX(0.9643);">Line List</div>
<div class="btab" style="left:1853.5px;width:115.20000000000005px"></div>
<div class="t thin3b" style="left:1870.93px;top:1398.00px;font-size:19.40px;color:#fff;transform:scaleX(1.0103);">Land Act.</div>
<div class="btab act" style="left:1976px;width:104px"></div>
<div class="t thin3" style="left:1993.09px;top:1398.00px;font-size:19.40px;color:#fff;transform:scaleX(0.9714);">Plat Info</div>
<div class="btab" style="left:2086.8px;width:85.0px"></div>
<div class="t thin3b" style="left:2104.50px;top:1398.00px;font-size:19.40px;color:#fff;transform:scaleX(1.0184);">Acqu.</div>
<div class="btab" style="left:2178.7px;width:78.30000000000018px"></div>
<div class="t thin3b" style="left:2196.10px;top:1398.00px;font-size:19.40px;color:#fff;transform:scaleX(1.0261);">Offer</div>
<div class="btab" style="left:2264px;width:91.80000000000018px"></div>
<div class="t thin3b" style="left:2281.63px;top:1398.00px;font-size:19.40px;color:#fff;transform:scaleX(1.0033);">Convo</div>
<div class="btab" style="left:2362.4px;width:158.79999999999973px"></div>
<div class="t thin3b" style="left:2379.71px;top:1398.00px;font-size:19.40px;color:#fff;transform:scaleX(1.0193);">Current Action</div>
</body></html>
